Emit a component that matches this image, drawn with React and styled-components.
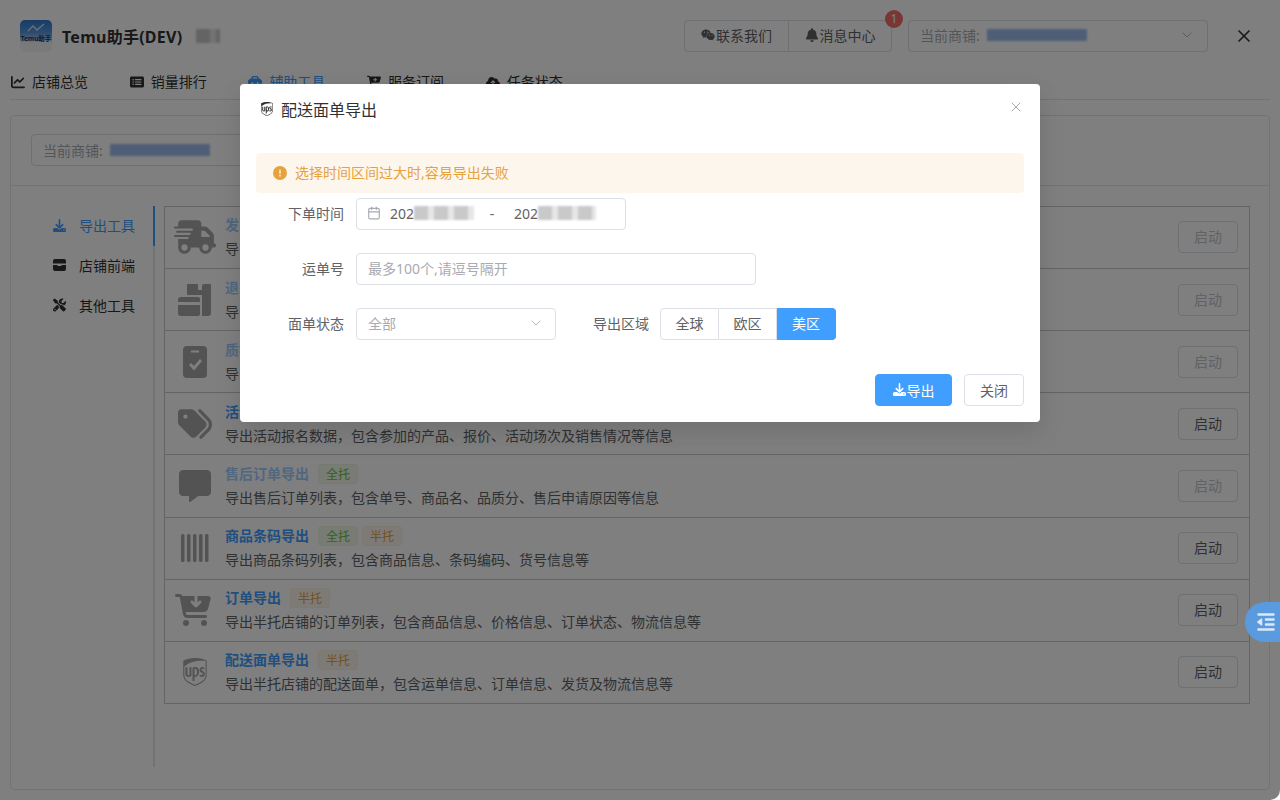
import React from 'react';
import styled, { createGlobalStyle } from 'styled-components';
import { FaWeixin, FaBell, FaChartLine, FaRectangleList, FaToolbox, FaCartPlus, FaCloudArrowUp, FaDownload, FaScrewdriverWrench, FaTruckFast, FaTags, FaMessage, FaCartArrowDown, FaUps, FaOutdent, FaCircleExclamation } from 'react-icons/fa6';
import { LuChevronDown, LuX, LuCalendar } from 'react-icons/lu';

const Global = createGlobalStyle`
  html, body { margin: 0; padding: 0; height: 100%; background: #fff; overflow: hidden; }
  body { font-family: "Noto Sans", "Noto Sans CJK SC", sans-serif; color: #303133; font-size: 14px; }
  * { box-sizing: border-box; }
`;
const Page = styled.div`
  width: 1280px; height: 800px; display: flex; flex-direction: column; position: relative; overflow: hidden;
`;
const Header = styled.header`
  height: 71px; display: flex; align-items: center; padding: 0 26px 0 20px; flex: none;
`;
const Logo = styled.div`
  width: 32px; height: 32px; border-radius: 5px; flex: none; margin-right: 10px; overflow: hidden;
  background: linear-gradient(180deg, #2f78cf 0%, #5a97dd 40%, #a9c6ea 62%, #f1f3f6 70%, #f4f4f4 100%);
  display: flex; flex-direction: column; align-items: center;
`;
const LogoLine = styled.svg`width: 18px; height: 10px; margin-top: 3px; flex: none;`;
const LogoText = styled.span`
  font-size: 6.5px; line-height: 9px; margin-top: 1px; font-weight: 700; color: #15386b; white-space: nowrap;
`;
const AppName = styled.div`font-size: 16px; font-weight: 700; color: #303133; letter-spacing: .25px;`;
const Blur = styled.span`
  display: inline-block; width: ${p => p.$w}px; height: ${p => p.$h || 14}px;
  background: repeating-linear-gradient(90deg, #c9c9c9 0 14px, #e6e6e6 14px 20px);
  filter: blur(1px); margin-left: ${p => p.$ml || 0}px; flex: none;
`;
const Spacer = styled.div`flex: 1;`;
const ButtonGroup = styled.div`display: flex; margin-right: 16px;`;
const HeadBtn = styled.button`
  position: relative; height: 32px; width: ${p => p.$w}px; background: #fff; border: 1px solid #dcdfe6;
  margin-left: ${p => p.$join ? '-1px' : 0}; border-radius: ${p => p.$join ? '0 4px 4px 0' : '4px 0 0 4px'};
  font: inherit; font-size: 14px; color: #606266; display: flex; align-items: center; justify-content: center; gap: 1px; padding: 0 0 1px;
`;
const Badge = styled.span`
  position: absolute; top: -11px; right: -12px; width: 18px; height: 18px; border-radius: 50%; background: #f56c6c; color: #fff;
  font-size: 12px; display: flex; align-items: center; justify-content: center;
`;
const StoreSelect = styled.div`
  height: 32px; width: ${p => p.$w}px; border: 1px solid #dcdfe6; border-radius: 4px; display: flex; align-items: center;
  padding: 0 12px 1px 11px; color: #a8abb2; font-size: 14px; background: #fff;
`;
const Blue = styled.span`
  display: inline-block; height: 12px; width: ${p => p.$w}px; margin-left: 7px; background: #9dbdec; filter: blur(1px);
`;
const CloseWin = styled.div`margin-left: 26px; display: flex; color: #303133;`;
const Tabs = styled.nav`
  height: 28px; margin: 1px 10px 0; display: flex; border-bottom: 1px solid #e4e7ed; flex: none; gap: 41.7px; padding-left: 1px;
`;
const Tab = styled.div`
  display: flex; align-items: flex-start; height: 20px; gap: 7px; font-size: 14px; line-height: 20px; color: ${p => p.$on ? '#409eff' : '#303133'};
  svg { margin-top: 3px; }
`;
const Card = styled.main`
  margin: 15px 10px 10px; height: 675px; width: 1260px; border: 1px solid #e4e7ed; border-radius: 4px; display: flex; flex-direction: column; flex: none;
`;
const StoreRow = styled.div`
  height: 70px; border-bottom: 1px solid #e4e7ed; flex: none; padding: 18px 0 0 20px;
`;
const Body = styled.div`display: flex; padding: 20px 0 0 20px;`;
const Side = styled.aside`
  width: 124px; height: 561px; border-right: 2px solid #e4e7ed; position: relative; flex: none; padding-left: 22px;
`;
const SideMark = styled.div`position: absolute; right: -2px; top: 0; width: 2px; height: 40px; background: #409eff;`;
const SideItem = styled.div`
  height: 40px; display: flex; align-items: center; gap: 13px; font-size: 14px; padding-bottom: 2px; color: ${p => p.$on ? '#409eff' : '#303133'};
`;
const SideIcon = styled.span`width: 13px; display: flex; justify-content: center; flex: none;`;
const List = styled.div`
  margin-left: 9px; width: 1086px; border: 1px solid #c8c9cc; flex: none; height: 498px;
`;
const Row = styled.div`
  height: 62.12px; display: flex; align-items: center; border-top: ${p => p.$first ? 'none' : '1px solid #c8c9cc'}; padding-right: 11px;
  margin-top: ${p => p.$first ? '-1px' : 0};
`;
const IconBox = styled.div`
  width: 60px; display: flex; justify-content: center; color: #a6a6a6; flex: none; padding-right: ${p => p.$nudge || 0}px; svg { display: block; }
`;
const Info = styled.div`flex: 1; min-width: 0; display: flex; flex-direction: column; gap: 4px;`;
const TitleLine = styled.div`display: flex; align-items: center; height: 20px; gap: 9px;`;
const Title = styled.div`font-size: 14px; line-height: 20px; font-weight: 700; color: ${p => p.$off ? '#a0cfff' : '#409eff'};`;
const TagGroup = styled.div`display: flex; gap: 4px;`;
const Tag = styled.span`
  height: 20px; width: 40px; border-radius: 3px; font-size: 12px; display: flex; align-items: center; justify-content: center;
  background: ${p => p.$half ? '#fdf6ec' : '#f0f9eb'}; color: ${p => p.$half ? '#e6a23c' : '#67c23a'}; border: 1px solid ${p => p.$half ? '#fbf1e2' : '#e8f5e1'};
`;
const Desc = styled.div`font-size: 14px; line-height: 20px; color: #606266; white-space: nowrap;`;
const StartBtn = styled.button`
  width: 60px; height: 32px; border: 1px solid #dcdfe6; background: #fff; border-radius: 4px; font: inherit; font-size: 14px; padding: 0 0 2px;
  color: ${p => p.$off ? '#c0c4cc' : '#606266'};
`;
const Float = styled.div`
  position: absolute; right: 0; top: 602px; width: 35px; height: 40px; background: #5a9ade; border-radius: 20px 0 0 20px;
  display: flex; align-items: center; padding-left: 11px; color: #dce8f6; z-index: 3;
`;
const Overlay = styled.div`
  position: absolute; inset: 0; background: rgba(0,0,0,.5); z-index: 2; display: flex; justify-content: center; padding-top: 84px;
`;
const Corner = styled.div`
  position: absolute; right: 0; bottom: 0; width: 10px; height: 10px; background: #fff; z-index: 3;
  clip-path: path('M10 0 A10 10 0 0 1 0 10 L10 10 Z');
`;
const Dialog = styled.section`
  width: 800px; height: 338px; background: #fff; border-radius: 4px; padding: 0 16px; display: flex; flex-direction: column; position: relative;
  box-shadow: 0 12px 32px 4px rgba(0,0,0,.04), 0 8px 20px rgba(0,0,0,.08);
`;
const DTitle = styled.div`
  height: 50px; display: flex; align-items: center; gap: 6px; padding-left: 3px; font-size: 16px; color: #303133; flex: none;
`;
const DClose = styled.div`position: absolute; right: 16px; top: 15px; color: #909399; display: flex;`;
const Alert = styled.div`
  margin-top: 19px; height: 40px; background: #fdf6ec; border-radius: 4px; color: #e6a23c; display: flex; align-items: center; padding: 0 0 2px 17px; gap: 8px; font-size: 14px; flex: none;
  svg { margin-top: 1px; }
`;
const Form = styled.div`display: flex; flex-direction: column; padding-top: 5px;`;
const FormRow = styled.div`display: flex; align-items: center; height: 32px; margin-bottom: 23px;`;
const Label = styled.label`
  width: ${p => p.$w || 100}px; padding: 0 ${p => p.$pr || 12}px 2px 0; text-align: right; color: #606266; font-size: 14px; flex: none;
`;
const RangeBox = styled.div`
  width: 270px; height: 32px; border: 1px solid #dcdfe6; border-radius: 4px; display: flex; align-items: center; padding: 0 0 2px 10px; color: #606266;
`;
const RangeVal = styled.div`display: flex; align-items: center; width: ${p => p.$w}px; margin-left: ${p => p.$ml}px;`;
const Sep = styled.span`width: 36px; text-align: center;`;
const Input = styled.input`
  width: 400px; height: 32px; border: 1px solid #dcdfe6; border-radius: 4px; padding: 0 11px 2px; font: inherit; font-size: 14px; outline: none;
  &::placeholder { color: #a8abb2; }
`;
const Select = styled.div`
  width: 200px; height: 32px; border: 1px solid #dcdfe6; border-radius: 4px; padding: 0 11px 2px; display: flex; align-items: center; justify-content: space-between; color: #a8abb2; font-size: 14px;
`;
const Radio = styled.div`display: flex;`;
const RadioBtn = styled.div`
  height: 32px; width: ${p => p.$w || 58}px; display: flex; align-items: center; justify-content: center; font-size: 14px; padding-bottom: 2px;
  color: ${p => p.$on ? '#fff' : '#606266'}; background: ${p => p.$on ? '#409eff' : '#fff'};
  border: 1px solid ${p => p.$on ? '#409eff' : '#dcdfe6'}; border-left-width: ${p => p.$first ? 1 : 0}px;
  border-radius: ${p => p.$first ? '4px 0 0 4px' : p.$on ? '0 4px 4px 0' : 0};
`;
const Footer = styled.div`display: flex; justify-content: flex-end; gap: 12px; position: absolute; right: 16px; bottom: 16px;`;
const PrimaryBtn = styled.button`
  width: 77px; height: 32px; background: #409eff; color: #fff; border: 1px solid #409eff; border-radius: 4px; font: inherit; font-size: 14px; padding: 0 0 1px;
  display: flex; align-items: center; justify-content: center; gap: 1px;
`;
const PlainBtn = styled.button`
  width: 60px; height: 32px; background: #fff; color: #606266; border: 1px solid #dcdfe6; border-radius: 4px; font: inherit; font-size: 14px; padding: 0 0 1px;
`;
const Glyph = styled.svg`display: block; fill: currentColor;`;

const BarcodeIcon = () => (
  <Glyph width="30" height="30" viewBox="0 0 30 30">
    {[1, 7, 13, 19, 25].map(x => <rect key={x} x={x} y="1" width="3.5" height="28" rx="1.5" />)}
  </Glyph>
);
const DollyIcon = () => (
  <Glyph width="34" height="32" viewBox="0 0 34 32">
    <path d="M10 0h9a1 1 0 0 1 1 1v5h4V2a2 2 0 0 1 2-2h6a1 1 0 0 1 1 1v28a3 3 0 0 1-3 3H24V11H9V1a1 1 0 0 1 1-1z" />
    <path d="M3 13h17a2 2 0 0 1 2 2v3H0v-2a3 3 0 0 1 3-3zM0 21h22v9a2 2 0 0 1-2 2H3a3 3 0 0 1-3-3z" />
  </Glyph>
);
const ClipIcon = () => (
  <Glyph width="24" height="32" viewBox="0 0 24 32">
    <path fillRule="evenodd" d="M4 0h16a4 4 0 0 1 4 4v24a4 4 0 0 1-4 4H4a4 4 0 0 1-4-4V4a4 4 0 0 1 4-4zM8 4.500v2h8v-2zM6 19l2-2 3 3 6-7 2 2-8 9.500z" />
  </Glyph>
);
const ShopIcon = () => (
  <Glyph width="13" height="12" viewBox="0 0 13 12">
    <path d="M2 0h9a2 2 0 0 1 2 2v2.500H0V2a2 2 0 0 1 2-2zM0 6h4.500v1h4V6H13v4a2 2 0 0 1-2 2H2a2 2 0 0 1-2-2z" />
  </Glyph>
);

const rows = [
  { icon: <FaTruckFast size={42} />, title: '发货台导出', tags: ['全托'], off: true, desc: '导出发货台数据，包含发货单号、商品信息、发货数量及物流信息等' },
  { icon: <DollyIcon />, title: '退货单导出', tags: ['全托'], off: true, desc: '导出退货单列表，包含退货单号、商品信息、退货原因等信息' },
  { icon: <ClipIcon />, title: '质检结果导出', tags: ['全托'], off: true, desc: '导出质检结果数据，包含商品信息、质检状态等信息' },
  { icon: <FaTags size={34} />, title: '活动报名导出', tags: ['全托'], desc: '导出活动报名数据，包含参加的产品、报价、活动场次及销售情况等信息' },
  { icon: <FaMessage size={32} />, title: '售后订单导出', tags: ['全托'], off: true, desc: '导出售后订单列表，包含单号、商品名、品质分、售后申请原因等信息' },
  { icon: <BarcodeIcon />, title: '商品条码导出', tags: ['全托', '半托'], desc: '导出商品条码列表，包含商品信息、条码编码、货号信息等' },
  { icon: <FaCartArrowDown size={36} />, title: '订单导出', tags: ['半托'], nudge: 5, desc: '导出半托店铺的订单列表，包含商品信息、价格信息、订单状态、物流信息等' },
  { icon: <FaUps size={32} />, title: '配送面单导出', tags: ['半托'], desc: '导出半托店铺的配送面单，包含运单信息、订单信息、发货及物流信息等' },
];

export default function App() {
  return (
    <Page>
      <Global />
      <Header>
        <Logo>
          <LogoLine viewBox="0 0 18 10"><polyline points="1,8 6,3 10,7 17,1" fill="none" stroke="#cfe2f8" strokeWidth="1.3" /></LogoLine>
          <LogoText>Temu助手</LogoText>
        </Logo>
        <AppName>Temu助手(DEV)</AppName>
        <Blur $w={24} $h={14} $ml={14} />
        <Spacer />
        <ButtonGroup>
          <HeadBtn $w={105}><FaWeixin size={14} />联系我们</HeadBtn>
          <HeadBtn $w={104} $join><FaBell size={14} />消息中心<Badge>1</Badge></HeadBtn>
        </ButtonGroup>
        <StoreSelect $w={300}>当前商铺:<Blue $w={100} /><Spacer /><LuChevronDown size={16} strokeWidth={1.3} /></StoreSelect>
        <CloseWin><LuX size={20} /></CloseWin>
      </Header>
      <Tabs>
        <Tab><FaChartLine size={14} />店铺总览</Tab>
        <Tab><FaRectangleList size={14} />销量排行</Tab>
        <Tab $on><FaToolbox size={14} />辅助工具</Tab>
        <Tab><FaCartPlus size={14} />服务订阅</Tab>
        <Tab><FaCloudArrowUp size={14} />任务状态</Tab>
      </Tabs>
      <Card>
        <StoreRow><StoreSelect $w={300}>当前商铺:<Blue $w={100} /></StoreSelect></StoreRow>
        <Body>
          <Side>
            <SideMark />
            <SideItem $on><SideIcon><FaDownload size={13} /></SideIcon>导出工具</SideItem>
            <SideItem><SideIcon><ShopIcon /></SideIcon>店铺前端</SideItem>
            <SideItem><SideIcon><FaScrewdriverWrench size={14} /></SideIcon>其他工具</SideItem>
          </Side>
          <List>
            {rows.map((r, i) => (
              <Row key={r.title} $first={i === 0}>
                <IconBox $nudge={r.nudge}>{r.icon}</IconBox>
                <Info>
                  <TitleLine>
                    <Title $off={r.off}>{r.title}</Title>
                    <TagGroup>{r.tags.map(t => <Tag key={t} $half={t === '半托'}>{t}</Tag>)}</TagGroup>
                  </TitleLine>
                  <Desc>{r.desc}</Desc>
                </Info>
                <StartBtn $off={r.off}>启动</StartBtn>
              </Row>
            ))}
          </List>
        </Body>
      </Card>
      <Float><FaOutdent size={20} /></Float>
      <Overlay>
        <Dialog>
          <DTitle><FaUps size={16} />配送面单导出</DTitle>
          <DClose><LuX size={16} strokeWidth={1.2} /></DClose>
          <Alert><FaCircleExclamation size={14} />选择时间区间过大时,容易导出失败</Alert>
          <Form>
            <FormRow>
              <Label>下单时间</Label>
              <RangeBox>
                <LuCalendar size={14} color="#a8abb2" />
                <RangeVal $w={84} $ml={9}>202<Blur $w={60} /></RangeVal>
                <Sep>-</Sep>
                <RangeVal $w={84} $ml={4}>202<Blur $w={58} /></RangeVal>
              </RangeBox>
            </FormRow>
            <FormRow>
              <Label>运单号</Label>
              <Input placeholder="最多100个,请逗号隔开" readOnly />
            </FormRow>
            <FormRow>
              <Label>面单状态</Label>
              <Select>全部<LuChevronDown size={16} strokeWidth={1.3} /></Select>
              <Label $w={104} $pr={11}>导出区域</Label>
              <Radio>
                <RadioBtn $first $w={59}>全球</RadioBtn>
                <RadioBtn>欧区</RadioBtn>
                <RadioBtn $on $w={59}>美区</RadioBtn>
              </Radio>
            </FormRow>
          </Form>
          <Footer>
            <PrimaryBtn><FaDownload size={13} />导出</PrimaryBtn>
            <PlainBtn>关闭</PlainBtn>
          </Footer>
        </Dialog>
      </Overlay>
      <Corner />
    </Page>
  );
}
